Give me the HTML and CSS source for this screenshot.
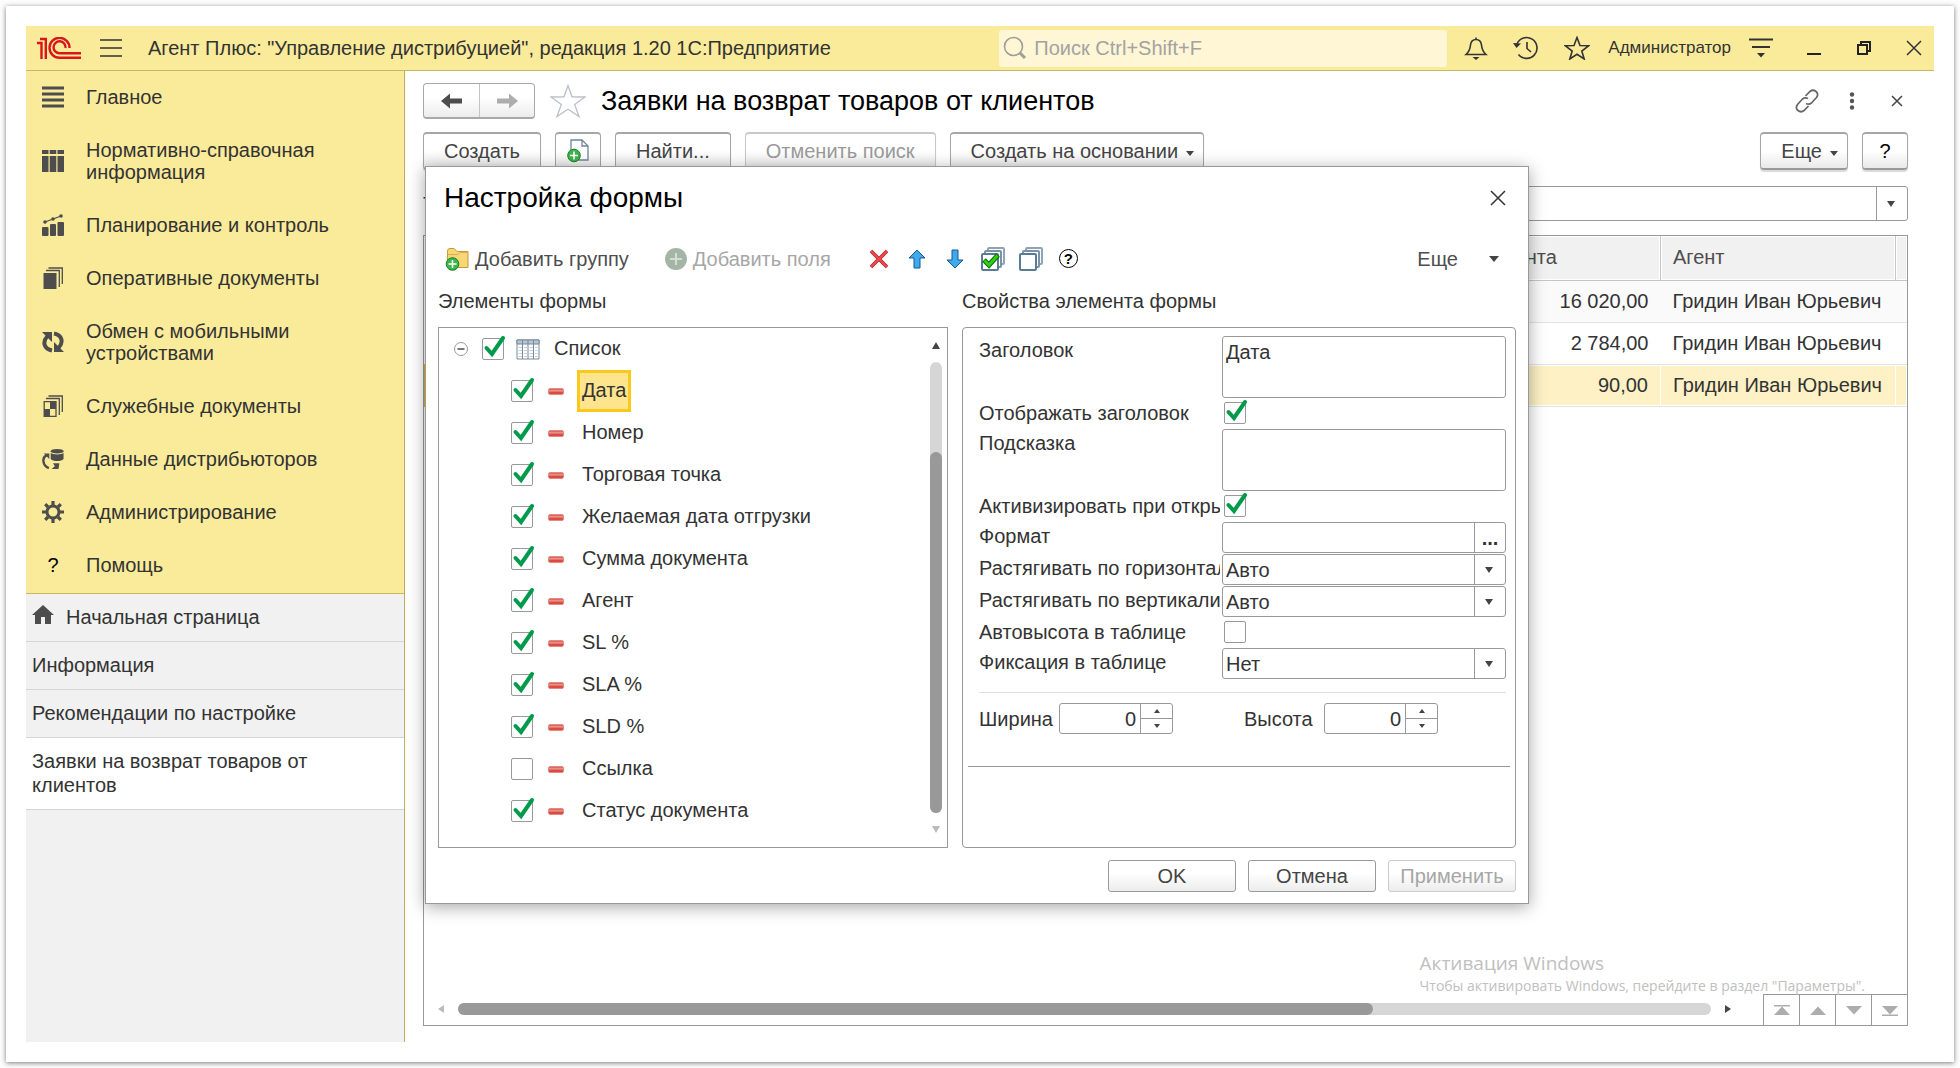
FILE: index.html
```html
<!DOCTYPE html>
<html lang="ru">
<head>
    <meta charset="UTF-8">
    <meta name="viewport" content="width=device-width, initial-scale=1.0">
    <title>Заявки на возврат товаров от клиентов</title>
    <link rel="stylesheet" href="styles.css">
</head>
<body>
    <div class="frame">
    <div class="app">
        <!-- Title bar -->
        <header class="titlebar">
            <svg class="logo" width="44" height="23" viewBox="0 0 44 23" fill="none" stroke="#d8161c" stroke-width="2.4">
                <path d="M0 6H4.500V22M3 2H8.800V22"/>
                <path d="M32.500 11A10 10 0 1 0 22.500 20.800H44"/>
                <path d="M28.500 11A6 6 0 1 0 22.500 16.300H44"/>
            </svg>
            <button type="button" class="icon-button burger" aria-label="Меню">
                <svg width="22" height="18" viewBox="0 0 22 18" stroke="#333" stroke-width="1.6"><path d="M0 1H22M0 9H22M0 17H22"/></svg>
            </button>
            <span class="app-title">Агент Плюс: "Управление дистрибуцией", редакция 1.20 1С:Предприятие</span>
            <label class="search">
                <svg width="24" height="24" viewBox="0 0 24 24" fill="none" stroke="#a09f96" stroke-width="1.6"><circle cx="10.500" cy="10.500" r="9"/><path d="M17 17L22 22" stroke-width="3"/></svg>
                <input type="search" placeholder="Поиск Ctrl+Shift+F" aria-label="Поиск">
            </label>
            <div class="title-tools">
                <button type="button" class="icon-button" aria-label="Оповещения">
                    <svg width="24" height="24" viewBox="0 0 24 24" fill="none" stroke="#333" stroke-width="1.6"><path d="M12 1.500V3.500M2 18.500C5 16 6 14 6.500 9C7 5 9 3.500 12 3.500S17 5 17.500 9C18 14 19 16 22 18.500Z"/><path d="M8.500 21H15.500L12 24Z" fill="#333" stroke="none"/></svg>
                </button>
                <button type="button" class="icon-button" aria-label="История">
                    <svg width="26" height="24" viewBox="0 0 26 24" fill="none" stroke="#333" stroke-width="1.6"><path d="M4 8A10.400 10.400 0 1 1 5.500 18.500M14 6V12.500L18 16"/><path d="M0 7L8 7.500L3.500 12Z" fill="#333" stroke="none"/></svg>
                </button>
                <button type="button" class="icon-button" aria-label="Избранное">
                    <svg width="26" height="24" viewBox="0 0 26 24" fill="none" stroke="#333" stroke-width="1.6"><path d="M13 1.500L16 9.500L24.500 9.800L17.800 15L20.200 23L13 18.300L5.800 23L8.200 15L1.500 9.800L10 9.500Z"/></svg>
                </button>
                <a href="#" class="user">Администратор</a>
                <button type="button" class="icon-button" aria-label="Сервис">
                    <svg width="24" height="20" viewBox="0 0 24 20" stroke="#333" stroke-width="1.8"><path d="M0 1.500H24M3 9H21"/><path d="M8 15H16L12 19.500Z" fill="#333" stroke="none"/></svg>
                </button>
            </div>
            <div class="window-tools">
                <button type="button" class="icon-button" aria-label="Свернуть">
                    <svg width="16" height="16" viewBox="0 0 16 16"><path d="M1 13H15V15H1Z" fill="#222"/></svg>
                </button>
                <button type="button" class="icon-button" aria-label="Восстановить">
                    <svg width="16" height="16" viewBox="0 0 16 16" fill="none" stroke="#222" stroke-width="2"><path d="M2 5H11V14H2ZM5 5V2H14V11H11"/></svg>
                </button>
                <button type="button" class="icon-button" aria-label="Закрыть">
                    <svg width="16" height="16" viewBox="0 0 16 16" stroke="#333" stroke-width="1.500"><path d="M1 1L15 15M15 1L1 15"/></svg>
                </button>
            </div>
        </header>

        <div class="body">
            <aside class="sidebar">
                <nav class="sections">
                    <a href="#"><svg width="22" height="22" viewBox="0 0 22 22" stroke="#4d4d4d" stroke-width="3"><path d="M0 2H22M0 8H22M0 14H22M0 20H22"/></svg>Главное</a>
                    <a href="#"><svg width="22" height="22" viewBox="0 0 22 22" fill="#4d4d4d"><path d="M0 0H6.500V4H0ZM7.700 0H14.300V4H7.700ZM15.500 0H22V4H15.500ZM0 6H6.500V22H0ZM7.700 6H14.300V22H7.700ZM15.500 6H22V22H15.500Z"/></svg>Нормативно-справочная информация</a>
                    <a href="#"><svg width="22" height="22" viewBox="0 0 22 22" fill="#4d4d4d"><rect x="0" y="13" width="6.500" height="9" rx="1"/><rect x="8" y="10" width="6" height="12" rx="1"/><rect x="15.500" y="8" width="6.500" height="14" rx="1"/><path d="M3 8L11 5L19 2" stroke="#4d4d4d" stroke-width="1.300" fill="none"/><circle cx="3" cy="8" r="1.800"/><circle cx="11" cy="5" r="1.800"/><circle cx="19" cy="2" r="1.800"/></svg>Планирование и контроль</a>
                    <a href="#"><svg width="22" height="22" viewBox="0 0 22 22" fill="none" stroke="#4d4d4d" stroke-width="1.300"><path d="M1.500 6H14.500V22H1.500Z" fill="#4d4d4d" stroke="none"/><path d="M4 3.500H17.300V20M6.500 1H20.300V17"/></svg>Оперативные документы</a>
                    <a href="#"><svg width="22" height="22" viewBox="0 0 22 22" fill="none" stroke="#4d4d4d" stroke-width="4"><path d="M10 19.500C2 18 0 11 5.500 5M12 2.500C20 4 22 11 16.500 17"/><path d="M0 1H10V11ZM22 21H12V11Z" fill="#4d4d4d" stroke="none"/></svg>Обмен с мобильными устройствами</a>
                    <a href="#"><svg width="22" height="22" viewBox="0 0 22 22" fill="none" stroke="#4d4d4d" stroke-width="1.300"><path d="M2.200 6.700H14V21.300H2.200Z"/><path d="M8 7H14V14H8ZM2 14H8V21H2Z" fill="#4d4d4d" stroke="none"/><path d="M4 3.500H17.300V20M6.500 1H20.300V17"/></svg>Служебные документы</a>
                    <a href="#"><svg width="22" height="22" viewBox="0 0 24 22" fill="#4d4d4d"><ellipse cx="16.500" cy="2.500" rx="7" ry="2.500"/><path d="M9.500 4.500C12 6.500 21 6.500 23.500 4.500V11C21 14 12 14 9.500 11Z"/><path d="M12 15.500H19L18 22H10.500L14 19Z"/><path d="M7.500 21C0 18 0 9 5 7" stroke="#4d4d4d" stroke-width="2.600" fill="none"/><path d="M2 5H8V11Z"/></svg>Данные дистрибьюторов</a>
                    <a href="#"><svg width="22" height="22" viewBox="0 0 22 22" fill="none" stroke="#4d4d4d"><circle cx="11" cy="11" r="6" stroke-width="3"/><path stroke-width="3.200" d="M11 0V4M11 18V22M0 11H4M18 11H22M3.200 3.200L6 6M16 16L18.800 18.800M18.800 3.200L16 6M6 16L3.200 18.800"/></svg>Администрирование</a>
                    <a href="#"><b class="question">?</b>Помощь</a>
                </nav>
                <nav class="tabs">
                    <a href="#"><svg width="22" height="20" viewBox="0 0 22 20" fill="#4d4d4d"><path d="M11 0L22 10H19V19H13V12H9V19H3V10H0Z"/></svg>Начальная страница</a>
                    <a href="#">Информация</a>
                    <a href="#">Рекомендации по настройке</a>
                    <a href="#" class="active">Заявки на возврат товаров от клиентов</a>
                </nav>
            </aside>

            <main class="content">
                <div class="heading">
                    <div class="history">
                        <button type="button" aria-label="Назад"><svg width="22" height="16" viewBox="0 0 22 16" fill="#4d4d4d"><path d="M0 8L9 0.500V5.500H21V10.500H9V15.500Z"/></svg></button>
                        <button type="button" aria-label="Вперед"><svg width="22" height="16" viewBox="0 0 22 16" fill="#adadad"><path d="M22 8L13 0.500V5.500H1V10.500H13V15.500Z"/></svg></button>
                    </div>
                    <button type="button" class="icon-button" aria-label="В избранное">
                        <svg width="36" height="34" viewBox="0 0 36 34" fill="none" stroke="#b9c0c8" stroke-width="1.300"><path d="M18 1.500L22 12.800L35 13L24.700 20.500L29 32.500L18 25.300L7 32.500L11.300 20.500L1 13L14 12.800Z"/></svg>
                    </button>
                    <h1>Заявки на возврат товаров от клиентов</h1>
                    <div class="heading-tools">
                        <button type="button" class="icon-button" aria-label="Ссылка">
                            <svg width="24" height="24" viewBox="0 0 24 24" fill="none" stroke="#666" stroke-width="1.700"><path d="M10.500 7L15 2.500Q18 0 21 2.500T21.500 8.500L16.500 14Q14 16 11 14.500M13.500 17L9 21.500Q6 24 3 21.500T2.500 15.500L7.500 10Q10 8 13 9.500"/></svg>
                        </button>
                        <button type="button" class="icon-button" aria-label="Еще">
                            <svg width="6" height="18" viewBox="0 0 6 18" fill="#555"><circle cx="3" cy="2.500" r="2.200"/><circle cx="3" cy="9" r="2.200"/><circle cx="3" cy="15.500" r="2.200"/></svg>
                        </button>
                        <button type="button" class="icon-button close-form" aria-label="Закрыть форму">
                            <svg width="12" height="12" viewBox="0 0 12 12" stroke="#444" stroke-width="1.500"><path d="M1 1L11 11M11 1L1 11"/></svg>
                        </button>
                    </div>
                </div>

                <div class="toolbar">
                    <button type="button" class="button">Создать</button>
                    <button type="button" class="button square" aria-label="Скопировать">
                        <svg width="22" height="24" viewBox="0 0 22 24"><path d="M4 1H15L21 7V21H4Z" fill="#fff" stroke="#6d8498" stroke-width="1.300"/><path d="M15 1V7H21" fill="none" stroke="#6d8498" stroke-width="1.300"/><circle cx="7" cy="16.500" r="6.300" fill="#3cb54a" stroke="#17822a"/><path d="M7 12.500V20.500M3 16.500H11" stroke="#fff" stroke-width="1.600"/></svg>
                    </button>
                    <button type="button" class="button">Найти...</button>
                    <button type="button" class="button" disabled>Отменить поиск</button>
                    <button type="button" class="button drop">Создать на основании</button>
                    <span class="spacer"></span>
                    <button type="button" class="button drop">Еще</button>
                    <button type="button" class="button square help">?</button>
                </div>

                <div class="filter">
                    <label for="filter">Т:</label>
                    <select id="filter" class="combo"><option></option></select>
                </div>

                <div class="list">
                    <table>
                        <colgroup><col class="col-rest"><col class="col-sum"><col class="col-agent"><col class="col-end"></colgroup>
                        <thead>
                            <tr><th></th><th>Сумма документа</th><th>Агент</th><th></th></tr>
                        </thead>
                        <tbody>
                            <tr><td></td><td class="number">16 020,00</td><td>Гридин Иван Юрьевич</td><td></td></tr>
                            <tr><td></td><td class="number">2 784,00</td><td>Гридин Иван Юрьевич</td><td></td></tr>
                            <tr class="current"><td></td><td class="number">90,00</td><td>Гридин Иван Юрьевич</td><td></td></tr>
                        </tbody>
                    </table>
                    <div class="list-footer">
                        <div class="hscroll">
                            <svg width="6" height="8" viewBox="0 0 6 8" fill="#bbb"><path d="M6 0V8L0 4Z"/></svg>
                            <div class="track"><div class="thumb"></div></div>
                            <svg width="6" height="8" viewBox="0 0 6 8" fill="#444"><path d="M0 0V8L6 4Z"/></svg>
                        </div>
                        <div class="pager">
                            <button type="button" aria-label="В начало"><svg width="16" height="11" viewBox="0 0 16 11" fill="#adadad"><path d="M0 0H16V1.500H0ZM8 1.500L16 10H0Z"/></svg></button>
                            <button type="button" aria-label="Вверх"><svg width="16" height="11" viewBox="0 0 16 11" fill="#adadad"><path d="M8 1.500L16 10H0Z"/></svg></button>
                            <button type="button" aria-label="Вниз"><svg width="16" height="11" viewBox="0 0 16 11" fill="#adadad"><path d="M8 9.500L16 1H0Z"/></svg></button>
                            <button type="button" aria-label="В конец"><svg width="16" height="11" viewBox="0 0 16 11" fill="#adadad"><path d="M8 9.500L16 1H0ZM0 9.500H16V11H0Z"/></svg></button>
                        </div>
                    </div>
                    <div class="watermark">
                        <p class="watermark-title">Активация Windows</p>
                        <p>Чтобы активировать Windows, перейдите в раздел "Параметры".</p>
                    </div>
                </div>

                <!-- Form settings window -->
                <section class="dialog" role="dialog" aria-labelledby="dialogTitle">
                    <div class="dialog-head">
                        <h2 id="dialogTitle">Настройка формы</h2>
                        <button type="button" class="icon-button" aria-label="Закрыть окно">
                            <svg width="16" height="16" viewBox="0 0 16 16" stroke="#333" stroke-width="1.500"><path d="M1 1L15 15M15 1L1 15"/></svg>
                        </button>
                    </div>

                    <div class="dialog-toolbar">
                        <button type="button" class="command">
                            <svg width="24" height="24" viewBox="0 0 24 24"><path d="M2.500 8V4Q2.500 1.500 5 1.500H9L12 4.500H23V20.500H2.500Z" fill="#f7d774" stroke="#c49a3c"/><path d="M3 7.500H13L15 5.500H22.500" fill="none" stroke="#e0a95a"/><circle cx="7.500" cy="17" r="6.300" fill="#3cb54a" stroke="#17822a"/><path d="M7.500 13V21M3.500 17H11.500" stroke="#fff" stroke-width="1.600"/></svg>
                            Добавить группу
                        </button>
                        <button type="button" class="command" disabled>
                            <svg width="22" height="22" viewBox="0 0 22 22"><circle cx="11" cy="11" r="11" fill="#a3b5a5"/><path d="M11 5V17M5 11H17" stroke="#d5ddd5" stroke-width="2"/></svg>
                            Добавить поля
                        </button>
                        <div class="actions">
                            <button type="button" class="icon-button" aria-label="Удалить">
                                <svg width="20" height="20" viewBox="0 0 20 20"><path d="M2 2L18 18M18 2L2 18" stroke="#b8282b" stroke-width="3.600"/><path d="M2 2L18 18M18 2L2 18" stroke="#f0494b" stroke-width="2"/></svg>
                            </button>
                            <button type="button" class="icon-button" aria-label="Переместить вверх">
                                <svg width="18" height="20" viewBox="0 0 18 20"><path d="M9 1L17 9H12V19H6V9H1Z" fill="#3fa9ee" stroke="#12598f"/></svg>
                            </button>
                            <button type="button" class="icon-button" aria-label="Переместить вниз">
                                <svg width="18" height="20" viewBox="0 0 18 20"><path d="M9 19L17 11H12V1H6V11H1Z" fill="#3fa9ee" stroke="#12598f"/></svg>
                            </button>
                            <button type="button" class="icon-button" aria-label="Установить флажки">
                                <svg width="24" height="24" viewBox="0 0 24 24" fill="#fff" stroke-width="2"><rect x="7" y="1" width="16" height="16" rx="1" stroke="#8fa3b5"/><rect x="4" y="4" width="16" height="16" rx="1" stroke="#7a92a8"/><rect x="1" y="7" width="16" height="16" rx="1" stroke="#5b7b95"/><path d="M3 13L8 18L17 8" fill="none" stroke="#0a6a0a" stroke-width="5"/><path d="M3.500 13.500L8 18L16.500 8.500" fill="none" stroke="#2ed012" stroke-width="3"/></svg>
                            </button>
                            <button type="button" class="icon-button" aria-label="Снять флажки">
                                <svg width="24" height="24" viewBox="0 0 24 24" fill="#fff" stroke-width="2"><rect x="7" y="1" width="16" height="16" rx="1" stroke="#8fa3b5"/><rect x="4" y="4" width="16" height="16" rx="1" stroke="#7a92a8"/><rect x="1" y="7" width="16" height="16" rx="1" stroke="#5b7b95"/></svg>
                            </button>
                            <button type="button" class="icon-button round" aria-label="Справка">?</button>
                        </div>
                        <span class="spacer"></span>
                        <button type="button" class="command more">Еще
                            <svg width="10" height="6" viewBox="0 0 10 6" fill="#444"><path d="M0 0H10L5 6Z"/></svg>
                        </button>
                    </div>

                    <div class="panels">
                        <div class="column tree-column">
                            <h3>Элементы формы</h3>
                            <div class="panel tree">
                                <ul>
                                    <li>
                                        <div class="root">
                                            <button type="button" class="icon-button" aria-label="Свернуть ветку"><svg width="14" height="14" viewBox="0 0 14 14" fill="none" stroke="#999"><circle cx="7" cy="7" r="6.500"/><path d="M3.500 7H10.500" stroke="#555" stroke-width="1.600"/></svg></button>
                                            <label>
                                                <input type="checkbox" checked>
                                                <svg width="24" height="21" viewBox="0 0 24 21" fill="none" stroke="#75899a"><path d="M1 1H23V20H1Z" fill="#fff"/><path d="M1 1H23V5H1Z" fill="#b9c6d2"/><path d="M6.500 1V20M12 1V20M17.500 1V20"/><path d="M2.500 8.500H21.500M2.500 11.500H21.500M2.500 14.500H21.500M2.500 17.500H21.500" stroke="#c5ced6" stroke-dasharray="3.500 2"/></svg>
                                                <span>Список</span>
                                            </label>
                                        </div>
                                        <ul class="children">
                                            <li><label><input type="checkbox" checked><i class="minus"></i><span class="selected">Дата</span></label></li>
                                            <li><label><input type="checkbox" checked><i class="minus"></i><span>Номер</span></label></li>
                                            <li><label><input type="checkbox" checked><i class="minus"></i><span>Торговая точка</span></label></li>
                                            <li><label><input type="checkbox" checked><i class="minus"></i><span>Желаемая дата отгрузки</span></label></li>
                                            <li><label><input type="checkbox" checked><i class="minus"></i><span>Сумма документа</span></label></li>
                                            <li><label><input type="checkbox" checked><i class="minus"></i><span>Агент</span></label></li>
                                            <li><label><input type="checkbox" checked><i class="minus"></i><span>SL %</span></label></li>
                                            <li><label><input type="checkbox" checked><i class="minus"></i><span>SLA %</span></label></li>
                                            <li><label><input type="checkbox" checked><i class="minus"></i><span>SLD %</span></label></li>
                                            <li><label><input type="checkbox"><i class="minus"></i><span>Ссылка</span></label></li>
                                            <li><label><input type="checkbox" checked><i class="minus"></i><span>Статус документа</span></label></li>
                                        </ul>
                                    </li>
                                </ul>
                                <div class="vscroll">
                                    <svg width="8" height="7" viewBox="0 0 8 7" fill="#444"><path d="M4 0L8 7H0Z"/></svg>
                                    <div class="track"><div class="thumb"></div></div>
                                    <svg width="8" height="7" viewBox="0 0 8 7" fill="#bbb"><path d="M4 7L8 0H0Z"/></svg>
                                </div>
                            </div>
                        </div>

                        <div class="column props-column">
                            <h3>Свойства элемента формы</h3>
                            <form class="panel props">
                                <div class="fields">
                                    <label for="caption">Заголовок</label>
                                    <textarea id="caption">Дата</textarea>
                                    <label for="showCaption">Отображать заголовок</label>
                                    <input type="checkbox" id="showCaption" checked>
                                    <label for="hint">Подсказка</label>
                                    <textarea id="hint"></textarea>
                                    <label for="activate">Активизировать при открытии</label>
                                    <input type="checkbox" id="activate" checked>
                                    <label for="format">Формат</label>
                                    <div class="picker"><input type="text" id="format"><button type="button">...</button></div>
                                    <label for="stretchH">Растягивать по горизонтали</label>
                                    <select id="stretchH" class="combo"><option>Авто</option></select>
                                    <label for="stretchV">Растягивать по вертикали</label>
                                    <select id="stretchV" class="combo"><option>Авто</option></select>
                                    <label for="autoHeight">Автовысота в таблице</label>
                                    <input type="checkbox" id="autoHeight">
                                    <label for="fixing">Фиксация в таблице</label>
                                    <select id="fixing" class="combo"><option>Нет</option></select>
                                </div>
                                <div class="size">
                                    <div class="size-item">
                                        <label for="width">Ширина</label>
                                        <div class="spin">
                                            <input type="number" id="width" value="0">
                                            <div class="spin-buttons"><button type="button" class="up" aria-label="Больше"></button><button type="button" class="down" aria-label="Меньше"></button></div>
                                        </div>
                                    </div>
                                    <div class="size-item">
                                        <label for="height">Высота</label>
                                        <div class="spin">
                                            <input type="number" id="height" value="0">
                                            <div class="spin-buttons"><button type="button" class="up" aria-label="Больше"></button><button type="button" class="down" aria-label="Меньше"></button></div>
                                        </div>
                                    </div>
                                </div>
                                <hr>
                            </form>
                        </div>
                    </div>

                    <div class="dialog-buttons">
                        <button type="button">OK</button>
                        <button type="button">Отмена</button>
                        <button type="button" disabled>Применить</button>
                    </div>
                </section>
            </main>
        </div>
    </div>
    </div>
</body>
</html>
```

FILE: styles.css
```css
* {
    box-sizing: border-box;
}
body {
    font-family: "Liberation Sans", Arial, sans-serif;
    font-size: 20px;
    line-height: 24px;
    color: #333;
    background-color: #fdfdfd;
    margin: 0;
    padding: 6px;
}
button, input, select, textarea {
    font: inherit;
    color: inherit;
}
button {
    padding: 0;
    cursor: pointer;
}
a {
    color: inherit;
    text-decoration: none;
}
h1, h2, h3, p, ul {
    margin: 0;
    padding: 0;
    font-weight: normal;
}
ul {
    list-style: none;
}
svg {
    display: block;
    flex: none;
}
.frame {
    background-color: white;
    padding: 20px;
    box-shadow: 0 1px 5px rgba(0, 0, 0, 0.5);
}
.app {
    display: flex;
    flex-direction: column;
    min-height: calc(100vh - 52px);
}
.icon-button {
    border: none;
    background: none;
}
.spacer {
    flex: 1;
}

/* Title bar */
.titlebar {
    display: flex;
    align-items: center;
    height: 45px;
    padding: 0 12px 0 11px;
    background-color: #faeb9b;
    border-bottom: 1px solid #c9b763;
}
.burger {
    margin: 0 26px 0 19px;
}
.app-title {
    flex: 1;
}
.search {
    display: flex;
    align-items: center;
    gap: 5px;
    width: 448px;
    height: 37px;
    padding: 0 4px;
    border-radius: 3px;
    background-color: #fef6d5;
}
.search input {
    flex: 1;
    border: none;
    outline: none;
    background: none;
}
.search input::placeholder {
    color: #a3a3a3;
}
.title-tools {
    display: flex;
    align-items: center;
    gap: 25px;
    margin-left: 17px;
}
.user {
    font-size: 17px;
    margin: 0 -7px;
}
.window-tools {
    display: flex;
    gap: 34px;
    margin-left: 33px;
}

.body {
    flex: 1;
    display: flex;
}

/* Sidebar */
.sidebar {
    width: 379px;
    flex: none;
    background-color: #f1f1f1;
    border-right: 1px solid #bfae5c;
}
.sections {
    padding-bottom: 1px;
    background-color: #faeb9b;
    border-bottom: 1px solid #c9b763;
}
.sections a {
    display: flex;
    align-items: center;
    gap: 22px;
    padding: 15px 60px 16px 16px;
    line-height: 22px;
}
.sections svg,
.question {
    width: 22px;
    flex: none;
}
.question {
    font-weight: normal;
    text-align: center;
    color: black;
}
.tabs a {
    display: flex;
    gap: 12px;
    padding: 11px 60px 12px 6px;
    border-bottom: 1px solid #d5d5d5;
}
.tabs .active {
    background-color: white;
}

/* Document list */
.content {
    position: relative;
    flex: 1;
    display: flex;
    flex-direction: column;
    min-width: 0;
    padding: 12px 26px 16px 18px;
}
.heading {
    display: flex;
    align-items: center;
    gap: 15px;
    height: 36px;
}
.history {
    display: flex;
    height: 36px;
    border: 1px solid #a8a8a8;
    border-bottom-width: 2px;
    border-radius: 4px;
    background: linear-gradient(white 40%, #ececec);
}
.history button {
    display: flex;
    align-items: center;
    justify-content: center;
    width: 55px;
    border: none;
    background: none;
}
.history button + button {
    border-left: 1px solid #c4c4c4;
}
h1 {
    flex: 1;
    font-size: 27px;
    line-height: 36px;
    color: black;
}
.heading-tools {
    display: flex;
    align-items: center;
    gap: 30px;
    padding-right: 5px;
}
.close-form {
    margin-left: 6px;
}
.toolbar {
    display: flex;
    gap: 14px;
    margin-top: 13px;
}
.button {
    height: 38px;
    padding: 0 20px;
    border: 1px solid #a6a6a6;
    border-top-width: 2px;
    border-bottom: 2px solid #999;
    border-radius: 4px;
    background: linear-gradient(white 50%, #e9e9e9);
    color: #444;
    box-shadow: 0 2px 1px rgba(0, 0, 0, 0.15);
}
.button:disabled {
    border-color: #c9c9c9;
    color: #9a9a9a;
}
.square {
    display: flex;
    align-items: center;
    justify-content: center;
    width: 46px;
    padding: 0;
}
.help {
    color: black;
}
.drop {
    padding-right: 9px;
}
.drop::after {
    content: "";
    display: inline-block;
    margin-left: 8px;
    vertical-align: 2px;
    border: 4px solid transparent;
    border-top: 5px solid #444;
    border-bottom: none;
}
.filter {
    display: flex;
    align-items: center;
    gap: 150px;
    margin-top: 16px;
}
.filter .combo {
    flex: 1;
    height: 35px;
}
.combo {
    appearance: none;
    width: 100%;
    height: 31px;
    padding: 0 34px 0 3px;
    border: 1px solid #999;
    border-radius: 3px;
    background-color: white;
    background-image: url("data:image/svg+xml,%3Csvg xmlns='http://www.w3.org/2000/svg' width='31' height='6'%3E%3Cpath d='M11 0H19L15 6Z' fill='%23444'/%3E%3C/svg%3E"), linear-gradient(#999, #999);
    background-repeat: no-repeat;
    background-position: right center, right 30px top;
    background-size: 31px 6px, 1px 100%;
}
.list {
    position: relative;
    flex: 1;
    display: flex;
    flex-direction: column;
    justify-content: space-between;
    margin-top: 14px;
    border: 1px solid #999;
}
table {
    width: 100%;
    table-layout: fixed;
    border-collapse: collapse;
}
.col-sum {
    width: 282px;
}
.col-agent {
    width: 235px;
}
.col-end {
    width: 11px;
}
th {
    height: 44px;
    padding: 0 12px 2px;
    font-weight: normal;
    text-align: left;
    color: #4d4d4d;
    background-color: #f1f1f1;
    border-right: 1px solid #c6c6c6;
    border-bottom: 1px solid #c6c6c6;
    box-shadow: inset 0 0 0 1px white;
}
td {
    height: 42px;
    padding: 0 12px;
    border-bottom: 1px solid #e3e3e3;
}
th:last-child,
td:last-child {
    padding: 0;
    border-right: none;
}
tbody tr:first-child {
    background-color: #fafafa;
}
.current td {
    background-color: #fdf1c5;
    border-right: 1px solid white;
    box-shadow: inset 0 1px white, inset 0 -1px white;
}
.current td:first-child {
    border-left: 3px solid #e5b51d;
}
.number {
    text-align: right;
}
.list-footer {
    display: flex;
    justify-content: space-between;
}
.hscroll {
    flex: 1;
    display: flex;
    align-items: center;
    gap: 14px;
    padding: 0 32px 2px 14px;
}
.track {
    flex: 1;
    border-radius: 6px;
    background-color: #d6d6d6;
}
.thumb {
    border-radius: 6px;
    background-color: #999;
}
.hscroll .thumb {
    width: 73%;
    height: 12px;
}
.pager {
    display: flex;
}
.pager button {
    display: flex;
    align-items: center;
    justify-content: center;
    width: 36px;
    height: 31px;
    border: solid #999;
    border-width: 1px 0 0 1px;
    background-color: white;
}
.watermark {
    position: absolute;
    right: 42px;
    bottom: 29px;
    font-family: "Open Sans", "Noto Sans", sans-serif;
    font-size: 14px;
    line-height: 20px;
    color: #c0c0c0;
}
.watermark-title {
    font-size: 19px;
    line-height: 26px;
}

/* Form settings window */
.dialog {
    position: absolute;
    left: 20px;
    top: 95px;
    width: 1104px;
    padding: 0 12px 11px;
    border: 1px solid #999;
    background-color: white;
    box-shadow: 0 3px 16px rgba(0, 0, 0, 0.35);
}
.dialog-head {
    display: flex;
    align-items: center;
    justify-content: space-between;
    height: 61px;
    padding: 0 10px 0 6px;
}
h2 {
    font-size: 28px;
    line-height: 32px;
    color: black;
}
.dialog-toolbar {
    display: flex;
    align-items: center;
    height: 61px;
    padding: 0 17px 0 7px;
}
.command {
    display: flex;
    align-items: center;
    gap: 6px;
    margin-right: 36px;
    border: none;
    background: none;
    color: #4d4d4d;
}
.command:disabled {
    color: #a6a6a6;
}
.more {
    gap: 31px;
    margin-right: 0;
}
.actions {
    display: flex;
    align-items: center;
    gap: 18px;
    margin-left: 2px;
}
.actions .icon-button {
    display: flex;
    justify-content: center;
    width: 20px;
}
.actions .round {
    height: 19px;
    width: 19px;
    border: 1px solid black;
    border-radius: 50%;
    font-size: 15px;
    font-weight: bold;
    line-height: 17px;
    color: black;
}
.panels {
    display: flex;
    gap: 14px;
}
.column {
    display: flex;
    flex-direction: column;
    min-width: 0;
}
.tree-column {
    flex: 510;
}
.props-column {
    flex: 554;
}
h3 {
    font-size: 20px;
    line-height: 24px;
    padding-bottom: 14px;
}
.panel {
    flex: 1;
    border: 1px solid #999;
    min-height: 521px;
}
.tree {
    display: flex;
    justify-content: space-between;
}
.root,
.tree label {
    display: flex;
    align-items: center;
}
.root {
    gap: 14px;
    height: 42px;
    padding-left: 15px;
}
.root label {
    gap: 12px;
}
.tree span {
    height: 42px;
    padding: 0 2px;
    line-height: 35px;
    border: 3px solid transparent;
}
.root span {
    margin-left: -3px;
}
.children label {
    height: 42px;
    padding-left: 72px;
}
.children .minus {
    margin: 0 13px 0 15px;
}
.minus {
    width: 16px;
    height: 7px;
    border: 1px solid #e08a82;
    border-radius: 2px;
    background: linear-gradient(#d9534a, #eda39d 40%, #dc4a40 60%);
}
.tree .selected {
    background-color: #fee48d;
    border-color: #fbc91b;
}
input[type="checkbox"] {
    appearance: none;
    position: relative;
    width: 22px;
    height: 22px;
    margin: 0;
    border: 1px solid #999;
    border-radius: 2px;
    background-color: white;
}
/* the tick rises a little over the box */
input[type="checkbox"]:checked::after {
    content: "";
    position: absolute;
    left: 0;
    top: -4px;
    width: 24px;
    height: 24px;
    background-image: url("data:image/svg+xml,%3Csvg xmlns='http://www.w3.org/2000/svg' width='24' height='24'%3E%3Cpath d='M3.500 13L9 19L20 3' fill='none' stroke='%23009a4b' stroke-width='4' stroke-linecap='round'/%3E%3C/svg%3E");
}
.vscroll {
    display: flex;
    flex-direction: column;
    align-items: center;
    gap: 13px;
    padding: 14px 5px;
}
.vscroll .track {
    display: flex;
    align-items: flex-end;
    width: 12px;
}
.vscroll .thumb {
    width: 12px;
    height: 80%;
}
.props {
    padding: 8px 5px;
    border-radius: 4px;
}
.fields {
    display: grid;
    grid-template-columns: 243px minmax(0, 1fr);
    row-gap: 1px;
    margin: 0 4px 0 11px;
    padding-bottom: 13px;
    border-bottom: 1px solid #e0e0e0;
}
.fields > label {
    height: 29px;
    margin-right: 2px;
    line-height: 29px;
    white-space: nowrap;
    overflow: hidden;
}
.fields input[type="checkbox"] {
    margin: 3px 2px 4px;
}
textarea {
    height: 62px;
    padding: 3px;
    border: 1px solid #999;
    border-radius: 3px;
    resize: none;
}
.picker,
.spin {
    display: flex;
    height: 31px;
    border: 1px solid #999;
    border-radius: 3px;
}
.picker input,
.spin input {
    flex: 1;
    min-width: 0;
    padding: 0 4px;
    border: none;
    background: none;
}
.picker button {
    width: 31px;
    border: none;
    border-left: 1px solid #999;
    background: none;
    font-weight: bold;
    line-height: 20px;
}
.size {
    display: flex;
    gap: 71px;
    padding: 10px 11px 32px;
}
.size-item {
    display: flex;
    align-items: center;
}
.size-item label {
    width: 80px;
}
.spin {
    width: 114px;
}
.spin input {
    appearance: textfield;
    text-align: right;
}
.spin input::-webkit-inner-spin-button {
    appearance: none;
    margin: 0;
}
.spin-buttons {
    display: flex;
    flex-direction: column;
    width: 32px;
    border-left: 1px solid #999;
}
.spin-buttons button {
    display: flex;
    flex: 1;
    align-items: center;
    justify-content: center;
    border: none;
    background: none;
}
.spin-buttons .down {
    border-top: 1px solid #999;
}
.spin-buttons button::after {
    content: "";
    border: 3px solid transparent;
}
.spin-buttons .up::after {
    border-bottom: 4px solid #444;
    border-top: none;
}
.spin-buttons .down::after {
    border-top: 4px solid #444;
    border-bottom: none;
}
hr {
    margin: 0;
    border: none;
    border-top: 1px solid #999;
}
.dialog-buttons {
    display: flex;
    justify-content: flex-end;
    gap: 12px;
    margin-top: 12px;
}
.dialog-buttons button {
    width: 128px;
    height: 32px;
    border: 1px solid #999;
    border-radius: 3px;
    background: linear-gradient(white 40%, #ececec);
    color: #444;
}
.dialog-buttons button:disabled {
    border-color: #ccc;
    color: #a6a6a6;
}
```
